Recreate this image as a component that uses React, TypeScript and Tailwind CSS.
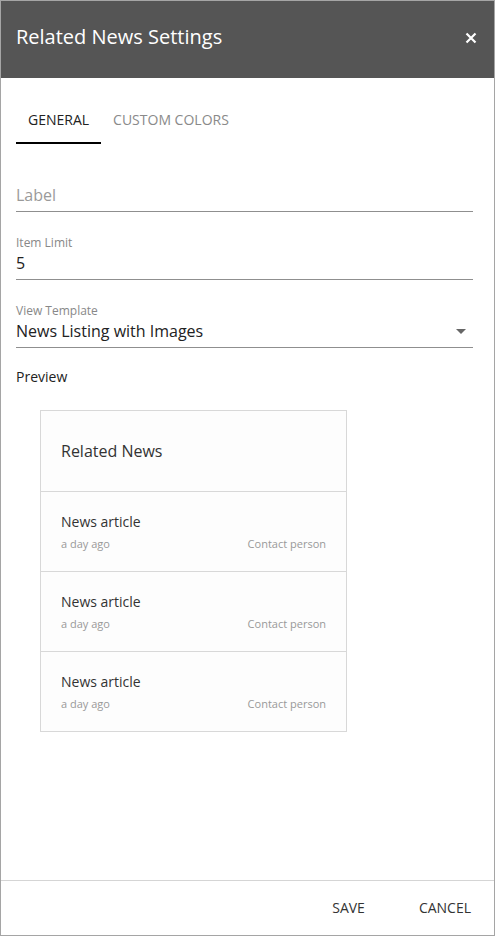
import React from "react";

function Row() {
  return (
    <div className="h-[80px] border-t border-[#d8d8d8] px-[20px] pt-[20px]">
      <div className="text-[14px] leading-[20px] text-[#333]">News article</div>
      <div className="mt-[4px] flex justify-between text-[11px] leading-[16px] text-[#999]">
        <span>a day ago</span>
        <span>Contact person</span>
      </div>
    </div>
  );
}

export default function App() {
  return (
    <div
      className="flex h-[936px] w-[495px] flex-col border border-[#a5a5a5] bg-white"
      style={{ fontFamily: '"Open Sans", sans-serif' }}
    >
      <div className="flex h-[77px] shrink-0 items-center justify-between bg-[#555555] pb-[5px] pl-[15px] pr-[17px]">
        <div className="text-[20px] leading-[28px] text-white">Related News Settings</div>
        <svg width="12" height="12" viewBox="0 0 12 12" className="mt-[2px]">
          <path d="M1.5 1.5 L10.5 10.5 M10.5 1.5 L1.5 10.5" stroke="white" strokeWidth="2.2" />
        </svg>
      </div>

      <div className="flex-1 pl-[15px] pr-[21px]">
        <div className="mt-[30px] flex">
          <div className="border-b-[2px] border-black px-[12px] pb-[10px] text-[14px] leading-[24px] text-[#222]">GENERAL</div>
          <div className="px-[12px] pb-[10px] text-[14px] leading-[24px] text-[#8a8a8a]">CUSTOM COLORS</div>
        </div>

        <div className="mt-[40px] border-b border-[#8f8f8f] pb-[5px] text-[16px] leading-[22px] text-[#9a9a9a]">Label</div>

        <div className="mt-[23px] text-[12px] leading-[16px] text-[#888]">Item Limit</div>
        <div className="mt-[1px] border-b border-[#8f8f8f] pb-[5px] text-[16px] leading-[22px] text-[#222]">5</div>

        <div className="mt-[23px] text-[12px] leading-[16px] text-[#888]">View Template</div>
        <div className="mt-[1px] flex items-center justify-between border-b border-[#8f8f8f] pb-[5px]">
          <span className="text-[16px] leading-[22px] text-[#222]">News Listing with Images</span>
          <svg width="10" height="5" viewBox="0 0 10 5" className="mr-[7px]">
            <path d="M0 0 L10 0 L5 5 Z" fill="#666" />
          </svg>
        </div>

        <div className="mt-[19px] text-[14px] leading-[20px] text-[#222]">Preview</div>

        <div className="ml-[24px] mt-[23px] w-[307px] border border-[#d8d8d8] bg-[#fdfdfd]">
          <div className="flex h-[80px] items-center px-[20px] text-[16px] leading-[22px] text-[#333]">Related News</div>
          <Row />
          <Row />
          <Row />
        </div>
      </div>

      <div className="flex h-[55px] shrink-0 items-center justify-end border-t border-[#d5d5d5] pb-[2px] pr-[23px] text-[14px] text-[#333]">
        <span>SAVE</span>
        <span className="ml-[54px]">CANCEL</span>
      </div>
    </div>
  );
}
